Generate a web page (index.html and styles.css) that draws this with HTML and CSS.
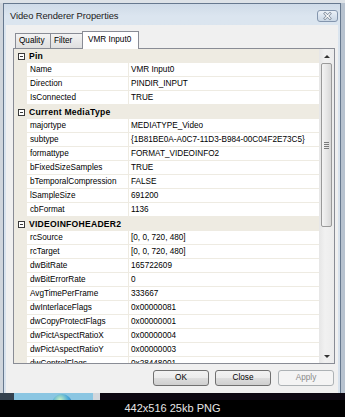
FILE: index.html
```html
<!DOCTYPE html>
<html>
<head>
<meta charset="utf-8">
<title>Video Renderer Properties</title>
<link rel="stylesheet" href="styles.css">
</head>
<body>
<div class="screen">
  <div class="top-strip"></div>
  <div class="middle">
    <div class="desk-left"></div>
    <div class="window">
      <div class="titlebar">
        <span class="title">Video Renderer Properties</span>
        <span class="close-btn">
          <svg width="21" height="12" viewBox="0 0 21 12">
            <defs>
              <linearGradient id="cb" x1="0" y1="0" x2="0" y2="1">
                <stop offset="0" stop-color="#eef3f8"/>
                <stop offset="0.5" stop-color="#d9e3ee"/>
                <stop offset="1" stop-color="#c9d6e4"/>
              </linearGradient>
            </defs>
            <rect x="0.5" y="0.5" width="20" height="11" rx="2.5" fill="url(#cb)" stroke="#8496ae"/>
            <path d="M8 3.5 L13 8.5 M13 3.5 L8 8.5" stroke="#7d8a9a" stroke-width="2.6" stroke-linecap="square"/>
            <path d="M8 3.5 L13 8.5 M13 3.5 L8 8.5" stroke="#ffffff" stroke-width="1.1" stroke-linecap="square"/>
          </svg>
        </span>
      </div>
      <div class="client">
        <div class="tabs">
          <div class="tab tab-quality">Quality</div>
          <div class="tab tab-filter">Filter</div>
          <div class="tab tab-active">VMR Input0</div>
        </div>
        <div class="panel">
          <div class="grid">
            <div class="rows">
              <div class="cat"><span class="margin"><span class="minus"></span></span><span class="cat-label">Pin</span></div>
              <div class="prop"><span class="margin"></span><span class="name">Name</span><span class="value">VMR Input0</span></div>
              <div class="prop"><span class="margin"></span><span class="name">Direction</span><span class="value">PINDIR_INPUT</span></div>
              <div class="prop"><span class="margin"></span><span class="name">IsConnected</span><span class="value">TRUE</span></div>
              <div class="cat"><span class="margin"><span class="minus"></span></span><span class="cat-label">Current MediaType</span></div>
              <div class="prop"><span class="margin"></span><span class="name">majortype</span><span class="value">MEDIATYPE_Video</span></div>
              <div class="prop"><span class="margin"></span><span class="name">subtype</span><span class="value">{1B81BE0A-A0C7-11D3-B984-00C04F2E73C5}</span></div>
              <div class="prop"><span class="margin"></span><span class="name">formattype</span><span class="value">FORMAT_VIDEOINFO2</span></div>
              <div class="prop"><span class="margin"></span><span class="name">bFixedSizeSamples</span><span class="value">TRUE</span></div>
              <div class="prop"><span class="margin"></span><span class="name">bTemporalCompression</span><span class="value">FALSE</span></div>
              <div class="prop"><span class="margin"></span><span class="name">lSampleSize</span><span class="value">691200</span></div>
              <div class="prop"><span class="margin"></span><span class="name">cbFormat</span><span class="value">1136</span></div>
              <div class="cat"><span class="margin"><span class="minus"></span></span><span class="cat-label">VIDEOINFOHEADER2</span></div>
              <div class="prop"><span class="margin"></span><span class="name">rcSource</span><span class="value">[0, 0, 720, 480]</span></div>
              <div class="prop"><span class="margin"></span><span class="name">rcTarget</span><span class="value">[0, 0, 720, 480]</span></div>
              <div class="prop"><span class="margin"></span><span class="name">dwBitRate</span><span class="value">165722609</span></div>
              <div class="prop"><span class="margin"></span><span class="name">dwBitErrorRate</span><span class="value">0</span></div>
              <div class="prop"><span class="margin"></span><span class="name">AvgTimePerFrame</span><span class="value">333667</span></div>
              <div class="prop"><span class="margin"></span><span class="name">dwInterlaceFlags</span><span class="value">0x00000081</span></div>
              <div class="prop"><span class="margin"></span><span class="name">dwCopyProtectFlags</span><span class="value">0x00000001</span></div>
              <div class="prop"><span class="margin"></span><span class="name">dwPictAspectRatioX</span><span class="value">0x00000004</span></div>
              <div class="prop"><span class="margin"></span><span class="name">dwPictAspectRatioY</span><span class="value">0x00000003</span></div>
              <div class="prop"><span class="margin"></span><span class="name">dwControlFlags</span><span class="value">0x28448001</span></div>
            </div>
            <div class="vscroll">
              <div class="sb-btn"><span class="arrow-up"></span></div>
              <div class="sb-track">
                <div class="sb-thumb"><span class="grip"></span></div>
              </div>
              <div class="sb-btn"><span class="arrow-down"></span></div>
            </div>
          </div>
        </div>
        <div class="buttons">
          <div class="btn">OK</div>
          <div class="btn">Close</div>
          <div class="btn btn-disabled">Apply</div>
        </div>
      </div>
    </div>
    <div class="desk-right"></div>
  </div>
  <div class="bottom-desk">
    <div class="bd-dark"></div>
    <div class="bd-blue"><span class="globe"></span></div>
    <div class="bd-grey"></div>
    <div class="bd-black"></div>
  </div>
  <div class="caption">442x516 25kb PNG</div>
</div>
</body>
</html>
```

FILE: styles.css
```css
* { box-sizing: border-box; }
html, body { margin: 0; padding: 0; }
body {
  width: 345px;
  height: 417px;
  overflow: hidden;
  background: #000;
  font-family: "Liberation Sans", Arial, sans-serif;
  font-size: 8.2px;
  color: #000;
}
.screen {
  display: flex;
  flex-direction: column;
  width: 345px;
  height: 417px;
}
.top-strip {
  height: 3px;
  background: #dde2e7;
}
.middle {
  display: flex;
  height: 390px;
}
.desk-left {
  width: 3px;
  background: #cfd5dc;
}
.window {
  width: 338px;
  display: flex;
  flex-direction: column;
  border: 1px solid #66788e;
  border-bottom: none;
  background: linear-gradient(#cfdbe8 0, #dbe5ef 12px, #d8e2ed 100%);
}
.desk-right {
  flex: 1;
  background: #b7c2cf;
}
.titlebar {
  height: 21px;
  display: flex;
  align-items: center;
  justify-content: space-between;
  padding: 2px 2px 0 6px;
}
.title {
  font-size: 9.4px;
  letter-spacing: -0.1px;
  color: #1b1b1b;
}
.close-btn {
  display: flex;
  width: 21px;
  height: 12px;
}
.client {
  flex: 1;
  margin: 0 2px;
  background: #f0f0f0;
  display: flex;
  flex-direction: column;
  padding: 6px 3px 0 7px;
}
.tabs {
  display: flex;
  align-items: flex-end;
  height: 17px;
  padding-left: 2px;
  position: relative;
  z-index: 1;
}
.tab {
  height: 15px;
  border: 1px solid #898c95;
  border-bottom: none;
  background: linear-gradient(#f3f3f3, #e9e9e9 50%, #dfdfdf);
  padding-left: 3px;
  line-height: 14px;
  white-space: nowrap;
}
.tab-quality { width: 36px; }
.tab-filter { width: 33px; margin-left: -1px; }
.tab-active {
  width: 57px;
  height: 18px;
  margin-left: -1px;
  margin-bottom: -1px;
  background: #fff;
  padding-left: 5px;
  line-height: 15px;
}
.panel {
  height: 316px;
  border: 1px solid #898c95;
}
.grid {
  display: flex;
  height: 100%;
}
.rows {
  flex: 1;
  overflow: hidden;
  background: #fff;
}
.prop, .cat {
  display: flex;
  height: 14px;
  line-height: 13px;
  white-space: nowrap;
}
.cat {
  background: #eeebe2;
}
.margin {
  width: 13px;
  flex: none;
  background: #eeebe2;
  display: flex;
  align-items: center;
  padding-left: 4px;
}
.minus {
  width: 7px;
  height: 7px;
  border: 1px solid #3a3a3a;
  background: #fff linear-gradient(#3a3a3a, #3a3a3a) no-repeat center / 3px 1px;
}
.cat-label {
  font-weight: bold;
  font-size: 8.6px;
  letter-spacing: 0.25px;
  padding-left: 2px;
  line-height: 14px;
}
.name {
  width: 102px;
  flex: none;
  padding-left: 3px;
  border-right: 1px solid #eeebe2;
  border-bottom: 1px solid #eeebe2;
  overflow: hidden;
}
.value {
  flex: 1;
  padding-left: 2px;
  border-bottom: 1px solid #eeebe2;
  overflow: hidden;
}
.vscroll {
  width: 15px;
  display: flex;
  flex-direction: column;
  background: linear-gradient(90deg, #e6e6e6, #f1f1f1 40%, #ececec);
}
.sb-btn {
  height: 14px;
  display: flex;
  align-items: center;
  justify-content: center;
}
.arrow-up {
  width: 0;
  height: 0;
  border-left: 3px solid transparent;
  border-right: 3px solid transparent;
  border-bottom: 3px solid #333;
}
.arrow-down {
  width: 0;
  height: 0;
  border-left: 3px solid transparent;
  border-right: 3px solid transparent;
  border-top: 3px solid #333;
}
.sb-track {
  flex: 1;
  padding: 0 2px;
}
.sb-thumb {
  height: 164px;
  border: 1px solid #9a9a9a;
  border-radius: 2px;
  background: linear-gradient(90deg, #f4f4f4, #e7e7e7 50%, #d8d8d8);
  display: flex;
  align-items: center;
  justify-content: center;
}
.grip {
  width: 5px;
  height: 7px;
  background: repeating-linear-gradient(#7a7a7a 0, #7a7a7a 1px, transparent 1px, transparent 2px);
}
.buttons {
  display: flex;
  justify-content: flex-end;
  gap: 6px;
  margin-top: 6px;
  padding-right: 1px;
}
.btn {
  width: 56px;
  height: 16px;
  border: 1px solid #707070;
  border-radius: 3px;
  background: linear-gradient(#f2f2f2 0%, #ebebeb 50%, #dddddd 51%, #cfcfcf 100%);
  text-align: center;
  line-height: 14px;
}
.btn-disabled {
  margin-left: 1px;
  border-color: #adb2b5;
  background: #f4f4f4;
  color: #8a8a8a;
}
.bottom-desk {
  display: flex;
  height: 7px;
  overflow: hidden;
}
.bd-dark { width: 14px; background: #34424f; }
.bd-blue {
  width: 79px;
  background: #8bc6e2;
  padding: 1px 0 0 38px;
}
.globe {
  display: block;
  width: 20px;
  height: 20px;
  border-radius: 50%;
  background: radial-gradient(circle at 40% 30%, #c8f0c0, #4aa8d8 45%, #2b6fb0 80%);
}
.bd-grey { width: 7px; background: #d3d7dc; }
.bd-black { flex: 1; background: #0d0812; }
.caption {
  height: 17px;
  background: #000;
  color: #e6e6e6;
  font-size: 11px;
  text-align: center;
  line-height: 16px;
}
```
